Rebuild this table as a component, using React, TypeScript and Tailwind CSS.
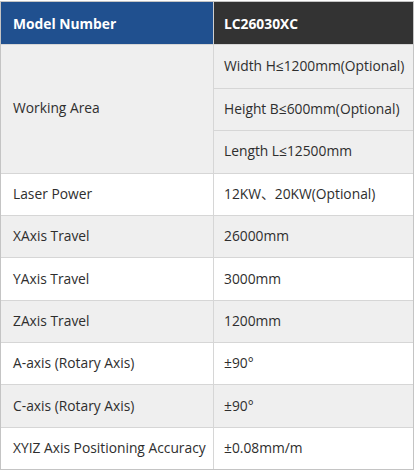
import React from "react";

const rows: { label: string; value: string; gray: boolean }[] = [
  { label: "Laser Power", value: "12KW、20KW(Optional)", gray: false },
  { label: "XAxis Travel", value: "26000mm", gray: true },
  { label: "YAxis Travel", value: "3000mm", gray: false },
  { label: "ZAxis Travel", value: "1200mm", gray: true },
  { label: "A-axis (Rotary Axis)", value: "±90°", gray: false },
  { label: "C-axis (Rotary Axis)", value: "±90°", gray: true },
  { label: "XYIZ Axis Positioning Accuracy", value: "±0.08mm/m", gray: false },
];

export default function App() {
  return (
    <div
      className="w-[416px] h-[473px] bg-white pt-[1px] text-[#2e2e2e]"
      style={{ fontFamily: '"Open Sans", "Noto Sans CJK SC", sans-serif' }}
    >
      <div className="w-[414px] border border-[#c4c4c4] text-[13.8px]">
        <div className="grid grid-cols-[213px_1fr] h-[42px]">
          <div className="bg-[#20508f] text-white font-bold flex items-center pl-[12px] pt-[2px] border-r border-[#d0d0d0]">
            Model Number
          </div>
          <div className="bg-[#333333] text-white font-bold flex items-center pl-[10px] pt-[2px]">
            LC26030XC
          </div>
        </div>
        <div className="grid grid-cols-[213px_1fr] bg-[#efefef] border-t border-[#d6d6d6]">
          <div className="flex items-center pl-[12px] border-r border-[#d6d6d6]">Working Area</div>
          <div className="flex flex-col">
            <div className="h-[42.5px] flex items-center pl-[10px]">Width H≤1200mm(Optional)</div>
            <div className="h-[42.5px] flex items-center pl-[10px] border-t border-[#d6d6d6]">
              Height B≤600mm(Optional)
            </div>
            <div className="h-[42.5px] flex items-center pl-[10px] border-t border-[#d6d6d6]">Length L≤12500mm</div>
          </div>
        </div>
        {rows.map((r) => (
          <div
            key={r.label}
            className={`grid grid-cols-[213px_1fr] h-[42.4px] border-t border-[#d6d6d6] ${
              r.gray ? "bg-[#efefef]" : "bg-white"
            }`}
          >
            <div className="flex items-center pl-[12px] border-r border-[#d6d6d6] whitespace-nowrap">{r.label}</div>
            <div className="flex items-center pl-[10px]">{r.value}</div>
          </div>
        ))}
      </div>
    </div>
  );
}
